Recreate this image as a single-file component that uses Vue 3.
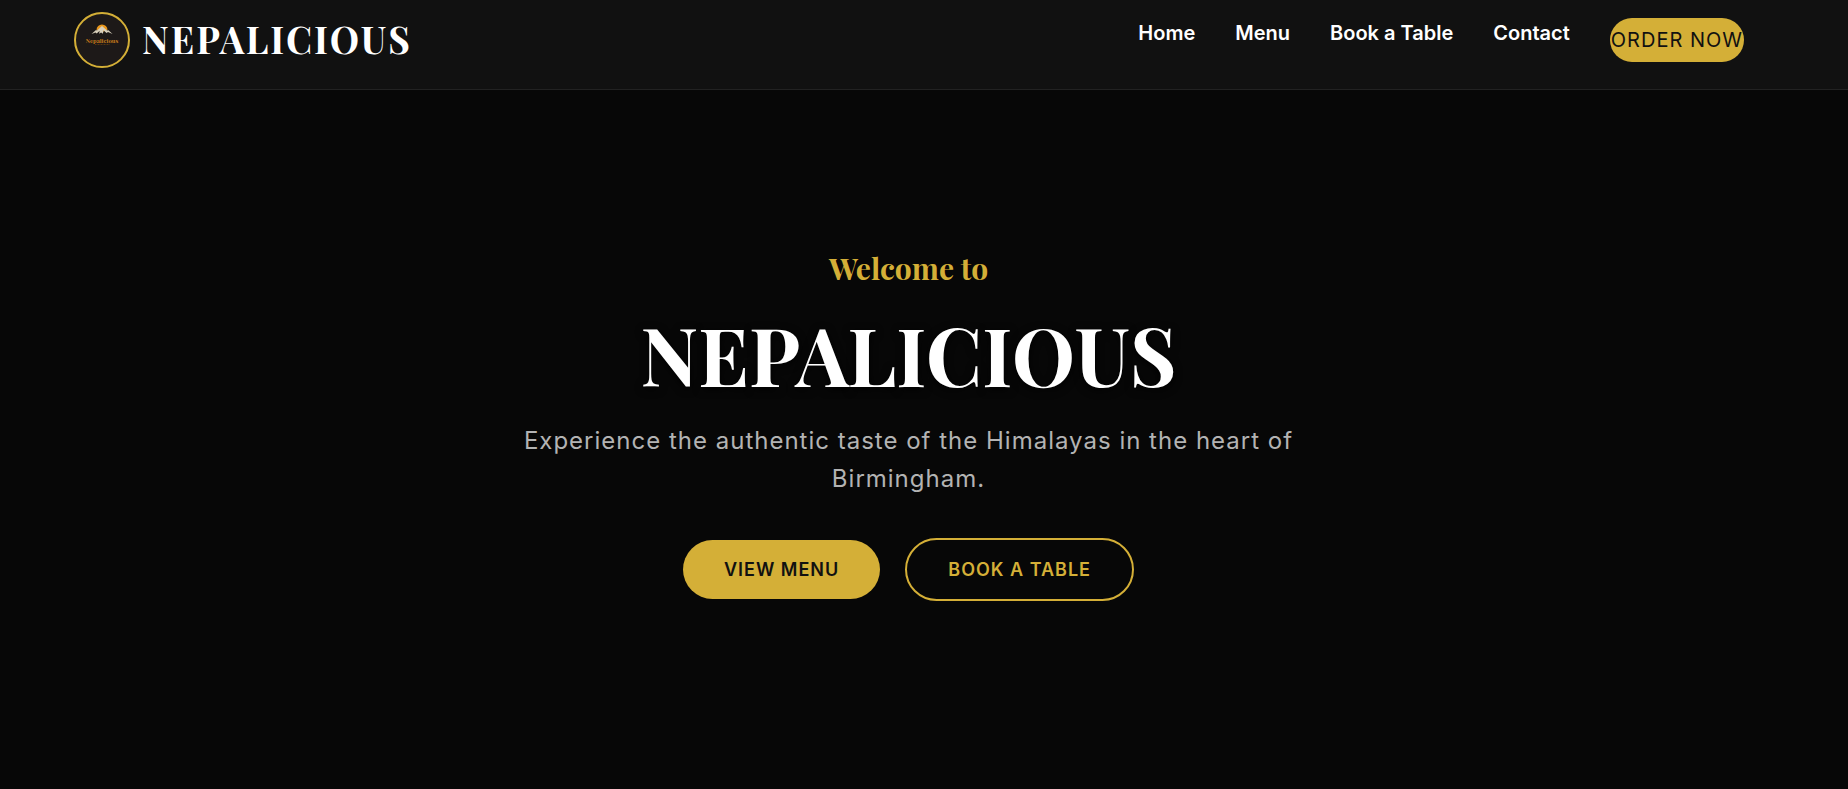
<script setup>
const links = [
  { label: 'Home', href: '#home' },
  { label: 'Menu', href: '#menu' },
  { label: 'Book a Table', href: '#book' },
  { label: 'Contact', href: '#contact' }
]
</script>

<template>
  <div class="page">
    <header class="header">
      <a class="brand" href="#home">
        <svg class="logo" viewBox="0 0 56 56" aria-hidden="true">
          <circle cx="28" cy="28" r="27" fill="#1d1918" stroke="#d4af37" stroke-width="2" />
          <path d="M22.5 18a5.5 5.5 0 0 1 11 0l-5.5 2z" fill="#e8961c" />
          <path d="M17.5 22l4.5-4 1 .4 5-4.4 5 4.6 1.5-.4 4 3.8-4.5-2-1.5 1-3-2.8-.6 3.6-1.8-1.4-2 1.4.6-3-3 2.6-1.2-.8z" fill="#d8d0bc" />
          <text x="28" y="30.5" text-anchor="middle" class="logo-text">Nepalicious</text>
          <path d="M21 32.5h15" stroke="#70420f" stroke-width="0.7" stroke-dasharray="1 0.5" />
        </svg>
        <span class="brand-name">NEPALICIOUS</span>
      </a>
      <nav class="nav">
        <a v-for="link in links" :key="link.label" class="nav-link" :href="link.href">{{ link.label }}</a>
        <button type="button" class="order">ORDER NOW</button>
      </nav>
    </header>
    <main class="hero">
      <p class="welcome">Welcome to</p>
      <h1 class="title">NEPALICIOUS</h1>
      <p class="tagline">Experience the authentic taste of the Himalayas in the heart of Birmingham.</p>
      <div class="actions">
        <a class="btn primary" href="#menu">VIEW MENU</a>
        <a class="btn outline" href="#book">BOOK A TABLE</a>
      </div>
    </main>
  </div>
</template>

<style>
body {
  margin: 0;
  background: #070707;
}
</style>

<style scoped>
.page {
  min-height: 100vh;
  box-sizing: border-box;
  background: #070707;
  color: #fff;
  font-family: Inter, sans-serif;
}
.header {
  display: flex;
  justify-content: space-between;
  align-items: center;
  padding: 12px 104px 21px 74px;
  background: #111;
  border-bottom: 1px solid #222;
}
.brand {
  display: flex;
  align-items: center;
  gap: 12px;
  color: #fff;
  text-decoration: none;
}
.logo {
  width: 56px;
  height: 56px;
}
.logo-text {
  font: bold 6px "Playfair Display", "Liberation Serif", serif;
  fill: #c97d18;
}
.brand-name {
  padding-bottom: 2px;
  font: bold 37px/48px "Playfair Display", "Liberation Serif", serif;
  letter-spacing: 2px;
}
.nav {
  display: flex;
  align-items: center;
  gap: 40px;
}
.nav-link {
  padding-bottom: 14px;
  color: #fff;
  font-size: 20px;
  font-weight: 600;
  line-height: 24px;
  text-decoration: none;
}
.order {
  padding: 0 1px;
  height: 44px;
  border: 0;
  border-radius: 22px;
  background: #d4af37;
  color: #111;
  font: 400 20px/24px Inter, sans-serif;
  letter-spacing: 1px;
}
.hero {
  display: flex;
  flex-direction: column;
  align-items: center;
  padding: 158px 31px 80px 0;
  text-align: center;
}
.welcome {
  margin: 0;
  color: #d4af37;
  font: bold 30px/40px "Playfair Display", "Liberation Serif", serif;
}
.title {
  margin: 18px 0 20px;
  font: bold 80px/96px "Playfair Display", "Liberation Serif", serif;
  text-shadow: 0 2px 8px #000;
}
.tagline {
  max-width: 800px;
  margin: 0;
  color: #b3b3b3;
  font-size: 24px;
  line-height: 38px;
  letter-spacing: 1px;
}
.actions {
  display: flex;
  align-items: center;
  gap: 25px;
  margin-top: 40px;
}
.btn {
  padding: 18px 41px;
  border-radius: 32px;
  font-size: 18px;
  font-weight: 600;
  line-height: 23px;
  letter-spacing: 1px;
  text-decoration: none;
}
.primary {
  background: #d4af37;
  color: #111;
}
.outline {
  border: 2px solid #d4af37;
  color: #d4af37;
}
</style>
